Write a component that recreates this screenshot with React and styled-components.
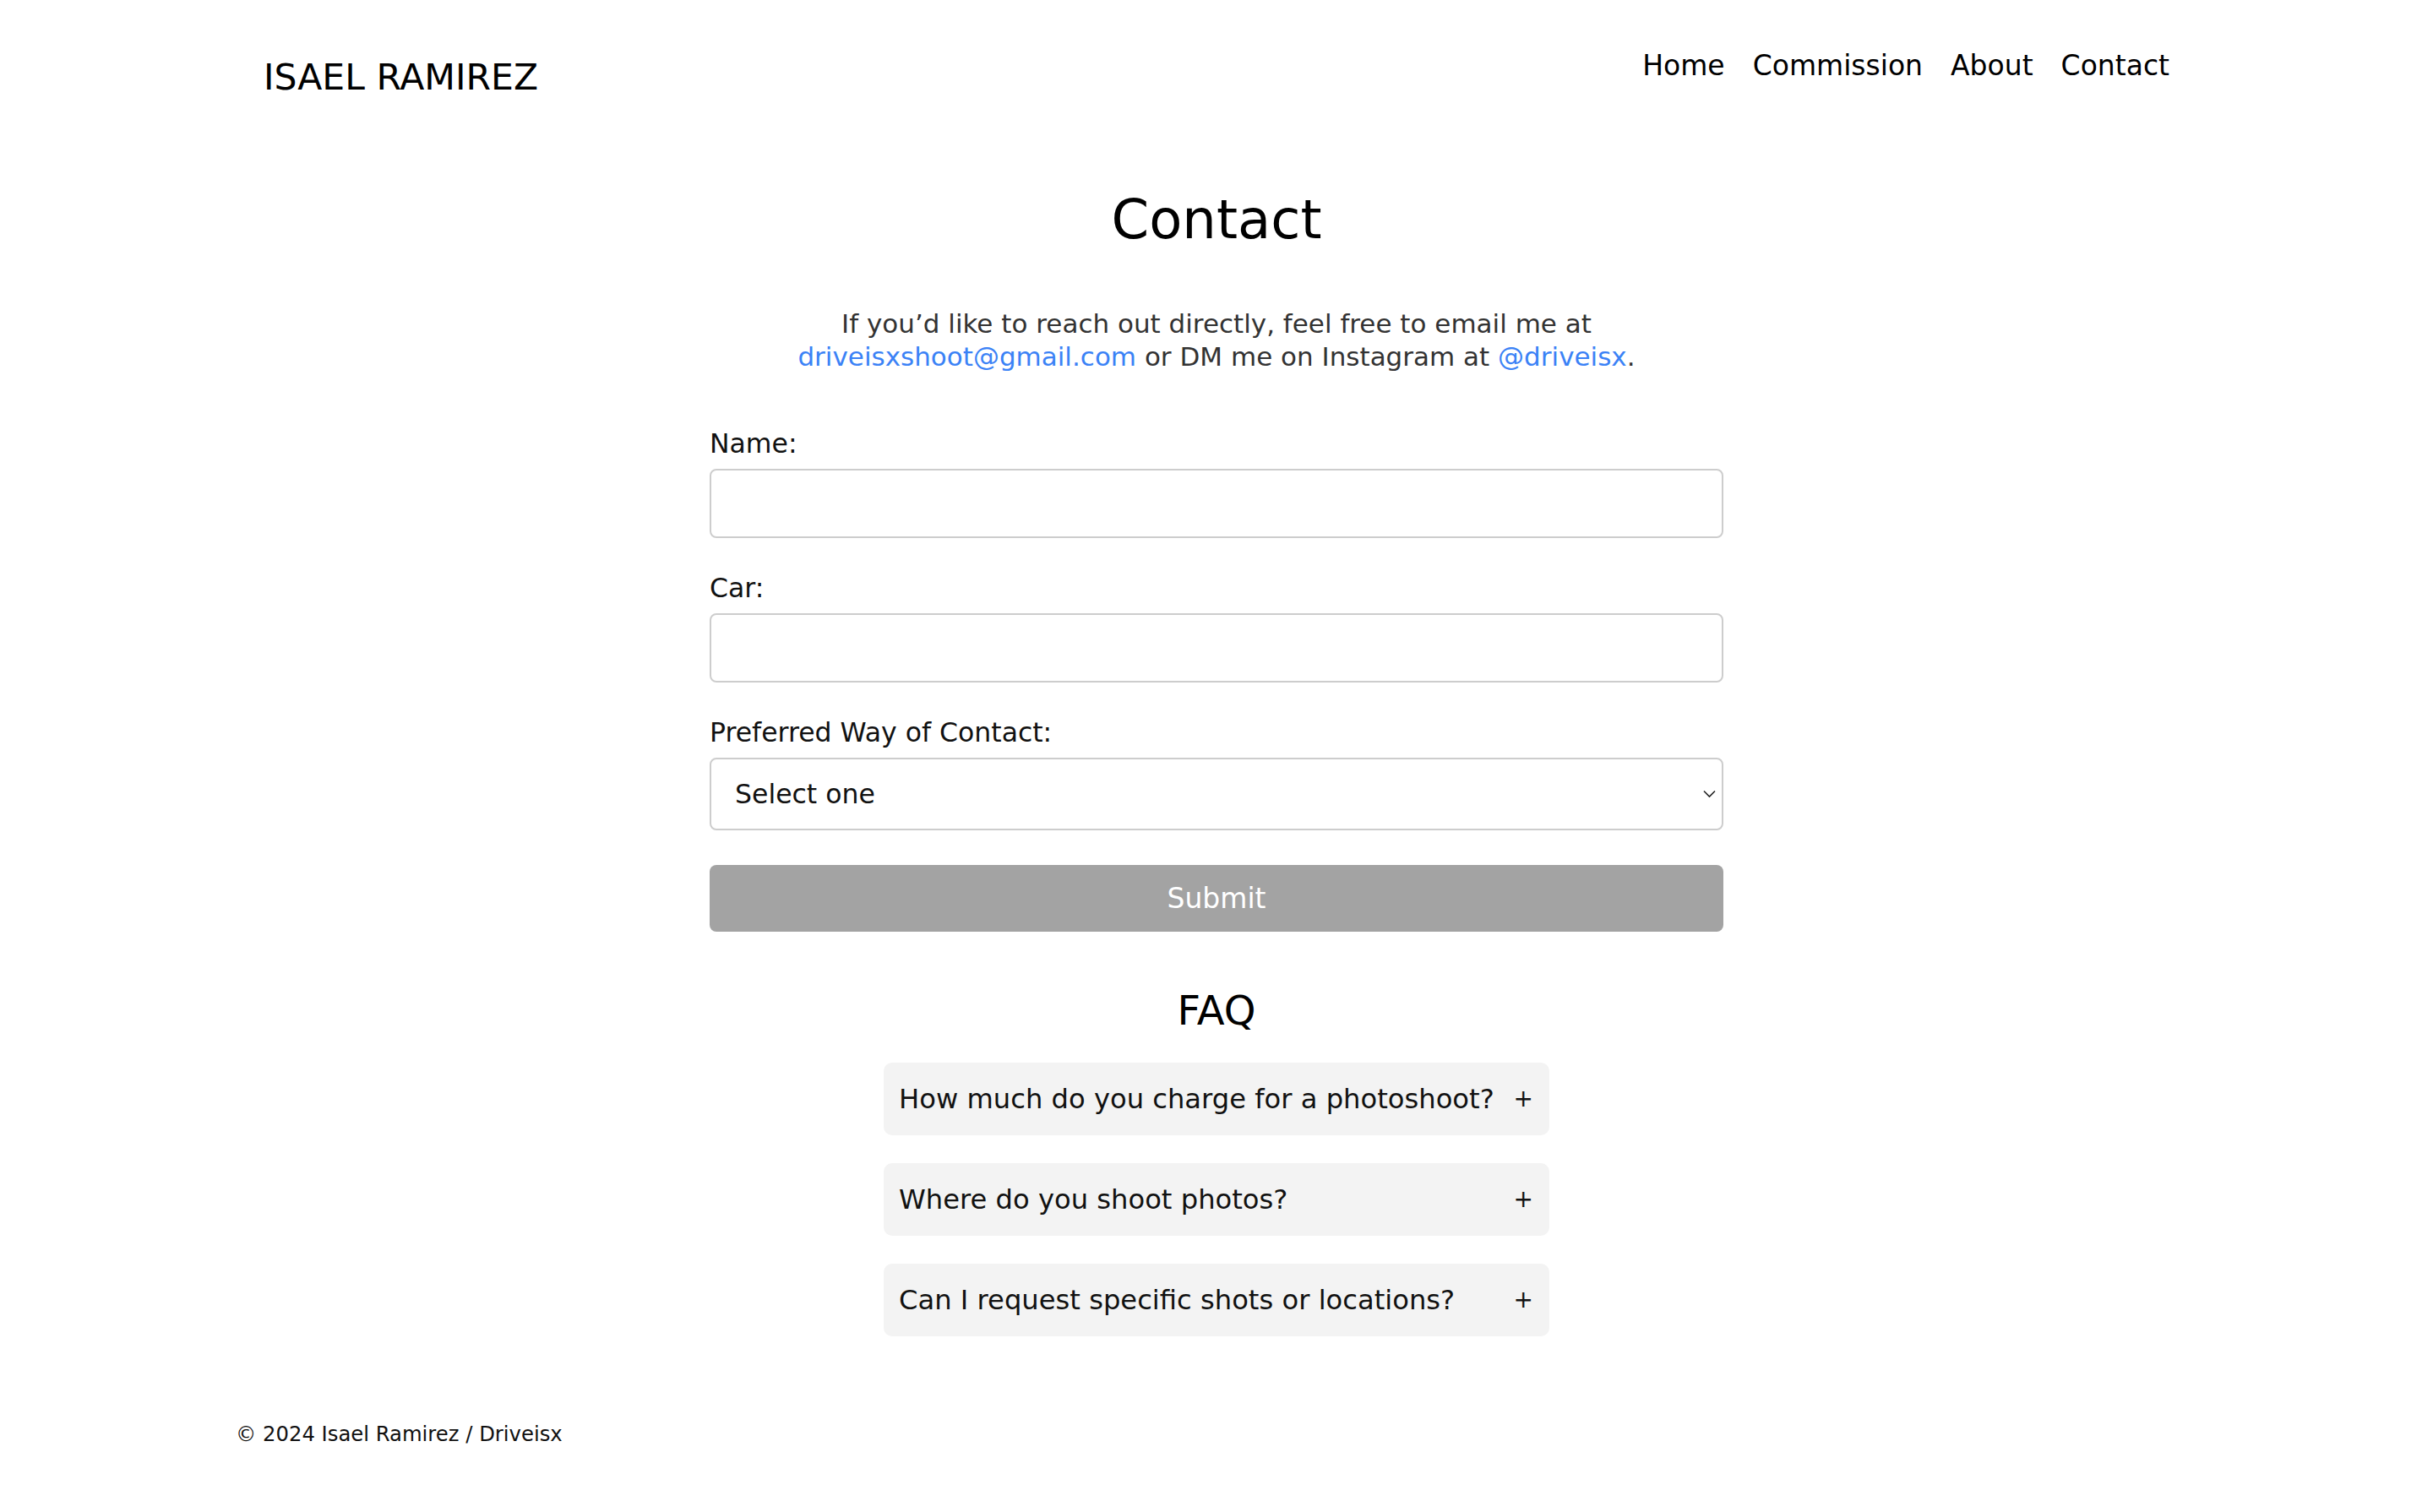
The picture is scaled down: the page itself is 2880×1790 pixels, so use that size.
import React from 'react';
import styled, { createGlobalStyle } from 'styled-components';

const GlobalStyle = createGlobalStyle`
  html, body {
    margin: 0;
    padding: 0;
    background: #ffffff;
  }
  body {
    font-family: "DejaVu Sans", "Liberation Sans", sans-serif;
    color: #000;
  }
  *, *::before, *::after {
    box-sizing: border-box;
  }
`;

const Page = styled.div`
  min-height: 1790px;
  display: flex;
  flex-direction: column;
  padding-bottom: 80px;
`;

const Header = styled.header`
  display: flex;
  justify-content: space-between;
  align-items: flex-start;
  padding: 59px 312px 0;
`;

const Logo = styled.div`
  font-size: 42.5px;
  line-height: 50px;
  margin-top: 8px;
  color: #000;
`;

const Nav = styled.nav`
  display: flex;
  gap: 33px;
`;

const NavLink = styled.a`
  font-size: 33px;
  line-height: 38px;
  color: #000;
  text-decoration: none;
`;

const Main = styled.main`
  width: 1200px;
  margin: 106px auto 0;
  display: flex;
  flex-direction: column;
  align-items: center;
`;

const Title = styled.h1`
  margin: 0;
  font-size: 64px;
  line-height: 74px;
  font-weight: 400;
  color: #000;
`;

const Intro = styled.p`
  margin: 67px 0 0;
  font-size: 31px;
  line-height: 39px;
  text-align: center;
  color: #333;
`;

const TextLink = styled.a`
  color: #3b82f6;
  text-decoration: none;
`;

const Form = styled.form`
  width: 100%;
  margin-top: 64px;
  display: flex;
  flex-direction: column;
`;

const Field = styled.div`
  display: flex;
  flex-direction: column;
  margin-bottom: 40px;
`;

const Label = styled.label`
  font-size: 31.5px;
  line-height: 38px;
  margin-bottom: 11px;
  color: #111;
`;

const Input = styled.input`
  height: 82px;
  width: 100%;
  border: 2px solid #cdcdcd;
  border-radius: 8px;
  padding: 0 28px;
  font-family: inherit;
  font-size: 31.5px;
  background: #fff;
  outline: none;
`;

const SelectWrap = styled.div`
  position: relative;
  width: 100%;
`;

const Select = styled.select`
  appearance: none;
  -webkit-appearance: none;
  height: 86px;
  width: 100%;
  border: 2px solid #cdcdcd;
  border-radius: 8px;
  padding: 0 40px 0 28px;
  font-family: inherit;
  font-size: 31.5px;
  color: #111;
  background: #fff;
  outline: none;
`;

const Chevron = styled.svg`
  position: absolute;
  right: 9px;
  top: 50%;
  transform: translateY(-50%);
  pointer-events: none;
`;

const SubmitButton = styled.button`
  margin-top: 1px;
  height: 79px;
  width: 100%;
  border: none;
  border-radius: 8px;
  background: #a3a3a3;
  color: #fff;
  font-family: inherit;
  font-size: 33px;
  cursor: pointer;
`;

const FaqSection = styled.section`
  margin-top: 65px;
  display: flex;
  flex-direction: column;
  align-items: center;
`;

const FaqTitle = styled.h2`
  margin: 0;
  font-size: 48px;
  line-height: 56px;
  font-weight: 400;
  color: #000;
`;

const FaqList = styled.div`
  margin-top: 34px;
  display: flex;
  flex-direction: column;
  gap: 33px;
`;

const FaqItem = styled.div`
  width: 788px;
  height: 86px;
  background: #f3f3f3;
  border-radius: 10px;
  padding: 0 19px 0 18px;
  display: flex;
  align-items: center;
  justify-content: space-between;
`;

const Question = styled.span`
  font-size: 32.2px;
  color: #111;
`;

const Plus = styled.span`
  font-size: 28px;
  line-height: 1;
  color: #111;
`;

const Footer = styled.footer`
  margin-top: 102px;
  padding: 0 279px;
  font-size: 24.3px;
  line-height: 28px;
  color: #111;
`;

const faqs = [
  'How much do you charge for a photoshoot?',
  'Where do you shoot photos?',
  'Can I request specific shots or locations?',
];

export default function App() {
  return (
    <>
      <GlobalStyle />
      <Page>
        <Header>
          <Logo>ISAEL RAMIREZ</Logo>
          <Nav>
            <NavLink href="#">Home</NavLink>
            <NavLink href="#">Commission</NavLink>
            <NavLink href="#">About</NavLink>
            <NavLink href="#">Contact</NavLink>
          </Nav>
        </Header>
        <Main>
          <Title>Contact</Title>
          <Intro>
            If you’d like to reach out directly, feel free to email me at{' '}
            <TextLink href="#">driveisxshoot@gmail.com</TextLink> or DM me on Instagram at{' '}
            <TextLink href="#">@driveisx</TextLink>.
          </Intro>
          <Form onSubmit={(e) => e.preventDefault()}>
            <Field>
              <Label htmlFor="name">Name:</Label>
              <Input id="name" type="text" />
            </Field>
            <Field>
              <Label htmlFor="car">Car:</Label>
              <Input id="car" type="text" />
            </Field>
            <Field>
              <Label htmlFor="contact">Preferred Way of Contact:</Label>
              <SelectWrap>
                <Select id="contact" defaultValue="">
                  <option value="">Select one</option>
                  <option value="email">Email</option>
                  <option value="instagram">Instagram</option>
                  <option value="phone">Phone</option>
                </Select>
                <Chevron width="15" height="9" viewBox="0 0 15 9" fill="none">
                  <path d="M1 1l6.5 6.5L14 1" stroke="#222" strokeWidth="1.6" />
                </Chevron>
              </SelectWrap>
            </Field>
            <SubmitButton type="submit">Submit</SubmitButton>
          </Form>
          <FaqSection>
            <FaqTitle>FAQ</FaqTitle>
            <FaqList>
              {faqs.map((q) => (
                <FaqItem key={q}>
                  <Question>{q}</Question>
                  <Plus>+</Plus>
                </FaqItem>
              ))}
            </FaqList>
          </FaqSection>
        </Main>
        <Footer>© 2024 Isael Ramirez / Driveisx</Footer>
      </Page>
    </>
  );
}
